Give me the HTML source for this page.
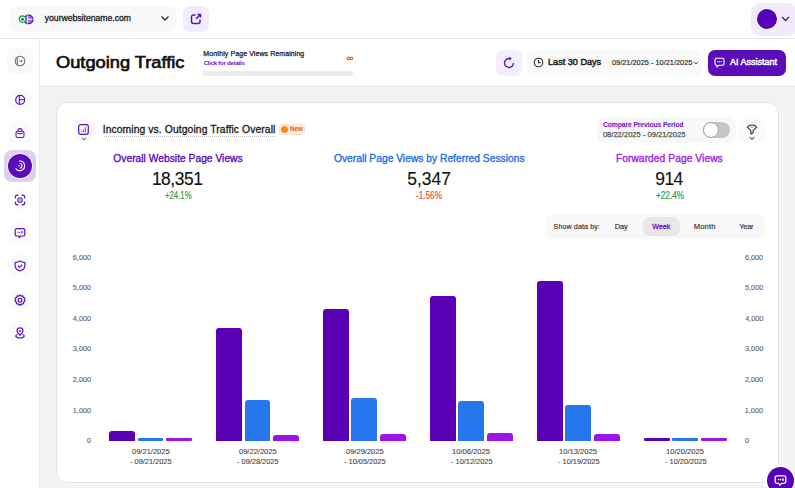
<!DOCTYPE html>
<html><head><meta charset="utf-8">
<style>
*{box-sizing:border-box;margin:0;padding:0}
html,body{width:795px;height:488px;overflow:hidden;background:#fff;font-family:"Liberation Sans",sans-serif;color:#1a1a1a}
.abs{position:absolute}
.t{position:absolute;white-space:nowrap;line-height:1}
#hdr{position:absolute;left:0;top:0;width:795px;height:39px;background:#fff;border-bottom:1px solid #e6e6e6}
#side{position:absolute;left:0;top:39px;width:40px;height:449px;background:#fff;border-right:1px solid #ececec}
#main{position:absolute;left:40px;top:87px;width:755px;height:401px;background:#f2f2f2}
#titlebar{position:absolute;left:40px;top:39px;width:755px;height:48px;background:#fff;border-bottom:1px solid #e3e3e3}
.sb{position:absolute;left:8px;width:24px;height:24px;border-radius:12px;background:#fbfbfb}
.card{position:absolute;left:56px;top:102px;width:723px;height:381px;background:#fff;border:1px solid #e2e2e2;border-radius:11px;box-shadow:1px 1.5px 0 1px #f7f7f7}
.bar{position:absolute;border-radius:3px 3px 0 0}
.b1{background:#5a00b5}.b2{background:#2677ee}.b3{background:#9c14e8}
</style></head><body>
<div id="hdr"></div>
<div id="side"></div>
<div id="titlebar"></div>
<div id="main"></div>
<div class="abs" style="left:10px;top:6px;width:166px;height:26px;border-radius:8px;background:#f8f8f8"></div>
<svg class="abs" style="left:17px;top:13px" width="18" height="13" viewBox="0 0 18 13">
  <circle cx="11.6" cy="6.4" r="4.3" fill="#9b6ee0" stroke="#5a10c0" stroke-width="1.3"/>
  <line x1="10.7" y1="2.3" x2="10.7" y2="10.5" stroke="#fff" stroke-width="1"/>
  <line x1="10.7" y1="6.3" x2="15.5" y2="6.3" stroke="#fff" stroke-width="1"/>
  <circle cx="5.5" cy="6.2" r="3.2" fill="#fff" stroke="#18b060" stroke-width="1.3"/>
  <circle cx="5.5" cy="6.2" r="1.5" fill="#118a40"/>
</svg>
<svg class="abs" style="left:159.5px;top:15.3px" width="10" height="7" viewBox="0 0 10 7"><path d="M1.5 1.5 L5 5 L8.5 1.5" fill="none" stroke="#333" stroke-width="1.4"/></svg>
<div class="abs" style="left:183px;top:6px;width:26px;height:26px;border-radius:7px;background:#f2edfc"></div>
<svg class="abs" style="left:190px;top:13px" width="12" height="12" viewBox="0 0 12 12"><path d="M5.5 2 H3.5 A2 2 0 0 0 1.5 4 V8.5 A2 2 0 0 0 3.5 10.5 H8 A2 2 0 0 0 10 8.5 V6.5" fill="none" stroke="#5a10c0" stroke-width="1.5"/><path d="M6 6 L10.5 1.5 M7.5 1.5 H10.5 V4.5" fill="none" stroke="#5a10c0" stroke-width="1.5"/></svg>
<div class="abs" style="left:751px;top:3px;width:46px;height:33px;border-radius:9px;background:#f1ebfb"></div>
<div class="abs" style="left:756px;top:8px;width:22px;height:22px;border-radius:11px;background:#fff"></div>
<div class="abs" style="left:757px;top:9px;width:20px;height:20px;border-radius:10px;background:#5600b8"></div>
<svg class="abs" style="left:781px;top:16px" width="9" height="6" viewBox="0 0 9 6"><path d="M1 1 L4.5 4.5 L8 1" fill="none" stroke="#333" stroke-width="1.3"/></svg>
<div class="t" style="left:44.76px;top:13.94px;font-size:8.69px;letter-spacing:-0.030px;font-weight:normal;color:#222;-webkit-text-stroke:0.3px #222;">yourwebsitename.com</div>
<div class="t" style="left:56.28px;top:54.02px;font-size:16.28px;letter-spacing:0.000px;font-weight:normal;color:#111;-webkit-text-stroke:0.65px #111;transform:scaleX(1.1213);transform-origin:0 0;">Outgoing Traffic</div>
<div class="t" style="left:203.34px;top:50.35px;font-size:7.03px;letter-spacing:0.075px;font-weight:normal;color:#222;-webkit-text-stroke:0.25px #222;">Monthly Page Views Remaining</div>
<div class="t" style="left:203.66px;top:59.66px;font-size:6.07px;letter-spacing:-0.250px;font-weight:bold;color:#6a10d0;">Click for details</div>
<svg class="abs" style="left:345px;top:55px" width="10" height="7" viewBox="0 0 10 7"><circle cx="3.4" cy="3.3" r="1.3" fill="none" stroke="#f0670f" stroke-width="1.15"/><circle cx="6.4" cy="3.3" r="1.3" fill="none" stroke="#f0670f" stroke-width="1.15"/></svg>
<div class="abs" style="left:203px;top:71px;width:150px;height:5px;border-radius:2px;background:#ececec"></div>
<div class="abs" style="left:496px;top:49.5px;width:26px;height:26px;border-radius:7px;background:#f3eefc"></div>
<svg class="abs" style="left:501.8px;top:55.8px" width="14" height="14" viewBox="0 0 14 14"><path d="M11.5 7 A4.5 4.5 0 1 1 7.6 2.5" fill="none" stroke="#5a10c0" stroke-width="1.35"/><path d="M7.2 0.8 L9.9 2.6 L7.2 4.4 Z" fill="#5a10c0"/></svg>
<div class="abs" style="left:527px;top:50px;width:175px;height:26px;border-radius:7px;background:#f9f9f9"></div>
<svg class="abs" style="left:532.9px;top:57px" width="11" height="11" viewBox="0 0 11 11"><circle cx="5.5" cy="5.5" r="4.3" fill="none" stroke="#333" stroke-width="1.1"/><path d="M5.5 2.9 V5.6 H7.7" fill="none" stroke="#333" stroke-width="1.1"/></svg>
<svg class="abs" style="left:693px;top:61px" width="6" height="4" viewBox="0 0 6 4"><path d="M0.8 0.8 L3 3 L5.2 0.8" fill="none" stroke="#444" stroke-width="0.9"/></svg>
<div class="abs" style="left:708px;top:49.5px;width:78px;height:26px;border-radius:7px;background:#5a0cb8"></div>
<svg class="abs" style="left:714px;top:57px" width="11" height="11" viewBox="0 0 11 11"><path d="M2.5 1.2 H8.5 A1.5 1.5 0 0 1 10 2.7 V6.7 A1.5 1.5 0 0 1 8.5 8.2 H5 L3 10 V8.2 H2.5 A1.5 1.5 0 0 1 1 6.7 V2.7 A1.5 1.5 0 0 1 2.5 1.2 Z" fill="none" stroke="#fff" stroke-width="1.1"/><circle cx="3.8" cy="4.7" r="0.6" fill="#fff"/><circle cx="5.5" cy="4.7" r="0.6" fill="#fff"/><circle cx="7.2" cy="4.7" r="0.6" fill="#fff"/></svg>
<div class="t" style="left:548.17px;top:58.10px;font-size:8.86px;letter-spacing:0.000px;font-weight:normal;color:#222;-webkit-text-stroke:0.45px #222;transform:scaleX(1.0303);transform-origin:0 0;">Last 30 Days</div>
<div class="t" style="left:612.01px;top:58.91px;font-size:7.31px;letter-spacing:0.036px;font-weight:normal;color:#333;-webkit-text-stroke:0.2px #333;">09/21/2025 - 10/21/2025</div>
<div class="t" style="left:730.10px;top:58.13px;font-size:8.83px;letter-spacing:0.000px;font-weight:normal;color:#fff;-webkit-text-stroke:0.45px #fff;transform:scaleX(1.0166);transform-origin:0 0;">AI Assistant</div>
<div class="abs" style="left:7px;top:47.5px;width:26px;height:26.5px;border-radius:8px;background:#f9f9f9"></div>
<svg class="abs" style="left:14px;top:54.7px" width="12" height="12" viewBox="0 0 12 12"><circle cx="6" cy="6" r="4.8" fill="none" stroke="#6a6a6a" stroke-width="1.05"/><path d="M3.3 2.3 V9.7" stroke="#6a6a6a" stroke-width="1.05"/><path d="M5 6 H8.3" stroke="#999" stroke-width="1.1"/><path d="M6.9 4.5 L8.5 6 L6.9 7.5 Z" fill="#6a6a6a"/></svg>
<div class="sb" style="top:88px"></div>
<svg class="abs" style="left:14px;top:94px" width="12" height="12" viewBox="0 0 12 12"><circle cx="6.2" cy="5.8" r="4.5" fill="none" stroke="#5a10c0" stroke-width="1.2"/><path d="M5.3 1.3 V10.3 M5.3 5.8 H10.7" fill="none" stroke="#5a10c0" stroke-width="1.1"/></svg>
<div class="sb" style="top:121px"></div>
<svg class="abs" style="left:14px;top:127px" width="12" height="12" viewBox="0 0 12 12"><path d="M4 4.2 V3.6 A2 2 0 0 1 8 3.6 V4.2" fill="none" stroke="#5a10c0" stroke-width="1.1"/><rect x="2" y="4.2" width="8" height="6.3" rx="1.8" fill="none" stroke="#5a10c0" stroke-width="1.1"/><path d="M3.2 6 Q6 8 8.8 6" fill="none" stroke="#5a10c0" stroke-width="1"/></svg>
<div class="abs" style="left:4px;top:150px;width:32px;height:32px;border-radius:8px;background:#dcd0f3"></div>
<div class="abs" style="left:6.8px;top:152.8px;width:26.4px;height:26.4px;border-radius:14px;background:#f4f0fb"></div>
<div class="abs" style="left:7.6px;top:153.6px;width:24.8px;height:24.8px;border-radius:13px;background:#5a0cb8"></div>
<svg class="abs" style="left:12px;top:158px" width="16" height="16" viewBox="0 0 16 16"><path d="M6.97 3.07 A4.8 4.8 0 1 1 3.64 10.2" fill="none" stroke="#fff" stroke-width="1.1"/><path d="M7.8 5.5 A2.3 2.3 0 0 1 7.8 10.1" fill="none" stroke="#fff" stroke-width="1.1"/><circle cx="7" cy="7.8" r="0.8" fill="#fff"/></svg>
<div class="sb" style="top:188px"></div>
<svg class="abs" style="left:14px;top:193.6px" width="12" height="12" viewBox="0 0 12 12"><path d="M1.3 4 V3.2 A2 2 0 0 1 3.3 1.2 H4 M8 1.2 H8.7 A2 2 0 0 1 10.7 3.2 V4 M10.7 8 V8.8 A2 2 0 0 1 8.7 10.8 H8 M4 10.8 H3.3 A2 2 0 0 1 1.3 8.8 V8" fill="none" stroke="#5a10c0" stroke-width="1.2" stroke-linecap="round"/><circle cx="6" cy="6" r="2.3" fill="none" stroke="#5a10c0" stroke-width="1.1"/><circle cx="6" cy="6" r="0.7" fill="#5a10c0"/></svg>
<div class="sb" style="top:221px"></div>
<svg class="abs" style="left:14px;top:226.5px" width="12" height="12" viewBox="0 0 12 12"><path d="M2.8 1.6 H9.2 A1.6 1.6 0 0 1 10.8 3.2 V7.4 A1.6 1.6 0 0 1 9.2 9 H6.6 L5.3 10.5 L4.2 9 H2.8 A1.6 1.6 0 0 1 1.2 7.4 V3.2 A1.6 1.6 0 0 1 2.8 1.6 Z" fill="none" stroke="#5a10c0" stroke-width="1.2" stroke-linejoin="round"/><circle cx="3.9" cy="5.3" r="0.6" fill="#5a10c0"/><circle cx="5.7" cy="5.3" r="0.6" fill="#5a10c0"/><path d="M8.1 4.1 V6.5" stroke="#5a10c0" stroke-width="1.1"/></svg>
<div class="sb" style="top:254px"></div>
<svg class="abs" style="left:14px;top:260px" width="12" height="12" viewBox="0 0 12 12"><path d="M6 1.1 C7.4 2.1 9 2.5 10.9 2.7 V5.8 C10.9 8.4 8.7 10.1 6 11 C3.3 10.1 1.1 8.4 1.1 5.8 V2.7 C3 2.5 4.6 2.1 6 1.1 Z" fill="none" stroke="#5a10c0" stroke-width="1.2" stroke-linejoin="round"/><path d="M3.9 5.7 L5.5 7.2 L8.2 4.6" fill="none" stroke="#5a10c0" stroke-width="1.2"/></svg>
<div class="sb" style="top:287.5px"></div>
<svg class="abs" style="left:14px;top:293.5px" width="12" height="12" viewBox="0 0 12 12"><path d="M6 1 L7.2 2.1 L8.8 1.8 L9.3 3.4 L10.8 4.1 L10.3 5.6 L11 7 L9.7 8 L9.6 9.6 L8 9.8 L7 11 L6 10.3 L5 11 L4 9.8 L2.4 9.6 L2.3 8 L1 7 L1.7 5.6 L1.2 4.1 L2.7 3.4 L3.2 1.8 L4.8 2.1 Z" fill="none" stroke="#5a10c0" stroke-width="1.2" stroke-linejoin="round"/><circle cx="6" cy="6.2" r="1.9" fill="none" stroke="#5a10c0" stroke-width="1.2"/></svg>
<div class="sb" style="top:320.7px"></div>
<svg class="abs" style="left:14px;top:326.7px" width="12" height="12" viewBox="0 0 12 12"><path d="M6 8.2 C4 6.4 3 5 3 3.8 A3 3 0 0 1 9 3.8 C9 5 8 6.4 6 8.2 Z" fill="none" stroke="#5a10c0" stroke-width="1.3"/><circle cx="6" cy="3.9" r="1" fill="#5a10c0"/><path d="M3.5 7.5 C1.5 8 1.3 9.8 3 10.4 C4.5 11 7.5 11 9 10.4 C10.7 9.8 10.5 8 8.5 7.5" fill="none" stroke="#5a10c0" stroke-width="1.2"/></svg>
<div class="card"></div>
<div class="abs" style="left:71.2px;top:117px;width:25px;height:25px;border-radius:13px;background:#f9f9f9"></div>
<svg class="abs" style="left:78.4px;top:124.2px" width="11" height="11" viewBox="0 0 11 11"><rect x="0.7" y="0.7" width="9.6" height="9.6" rx="2" fill="none" stroke="#5a10c0" stroke-width="1.2"/><path d="M3.6 8.3 V7.2 M5.5 8.3 V5.2 M7.4 8.3 V3.2" stroke="#8a60dc" stroke-width="1.2"/></svg>
<svg class="abs" style="left:80.8px;top:136.6px" width="6" height="4" viewBox="0 0 6 4"><path d="M0.6 0.6 L2.9 2.9 L5.2 0.6" fill="none" stroke="#888" stroke-width="1.1"/></svg>
<div class="abs" style="left:104px;top:136px;width:171px;height:1px;border-top:1px dotted #bdbdbd"></div>
<div class="abs" style="left:279.3px;top:124px;width:25.4px;height:11.4px;border-radius:3px;background:#fff1e4;border:1px solid #fde3cc"></div>
<div class="abs" style="left:281.1px;top:126.2px;width:7px;height:7px;border-radius:4px;background:#f7881c"></div>
<div class="abs" style="left:597px;top:116.5px;width:139px;height:26px;border-radius:7px;background:#f8f8f8"></div>
<div class="abs" style="left:703.4px;top:121.6px;width:26.2px;height:16.2px;border-radius:8.1px;background:#c6c6c6"></div>
<div class="abs" style="left:703.4px;top:121.6px;width:15.6px;height:16.2px;border-radius:8px;background:#fff;border:1px solid #a0a0a0"></div>
<div class="abs" style="left:739px;top:116.5px;width:25.5px;height:26px;border-radius:7px;background:#fafafa"></div>
<svg class="abs" style="left:746px;top:124px" width="12" height="17" viewBox="0 0 12 17"><path d="M1.3 3.2 L3.4 1.3 H8.6 L10.7 3.2 L7.1 6.6 V8.9 L4.9 9.9 V6.6 Z" fill="none" stroke="#333" stroke-width="1.1" stroke-linejoin="round"/><path d="M3.9 3.2 H8.1" stroke="#aaa" stroke-width="0.9"/><path d="M3.7 13.2 L6 15.3 L8.3 13.2" fill="none" stroke="#555" stroke-width="1.1"/></svg>
<div class="abs" style="left:546px;top:214px;width:219px;height:25px;border-radius:7px;background:#f8f8f8"></div>
<div class="abs" style="left:642.5px;top:217px;width:37px;height:19px;border-radius:7px;background:#e8e8e8"></div>
<div class="t" style="left:102.67px;top:125.05px;font-size:10.34px;letter-spacing:0.100px;font-weight:normal;color:#1a1a1a;-webkit-text-stroke:0.3px #1a1a1a;">Incoming vs. Outgoing Traffic Overall</div>
<div class="t" style="left:289.99px;top:126.20px;font-size:6.38px;letter-spacing:-0.061px;font-weight:bold;color:#f0501e;">New</div>
<div class="t" style="left:602.92px;top:122.06px;font-size:6.90px;letter-spacing:-0.163px;font-weight:bold;color:#6a10d0;">Compare Previous Period</div>
<div class="t" style="left:602.90px;top:131.38px;font-size:7.59px;letter-spacing:-0.004px;font-weight:normal;color:#555;-webkit-text-stroke:0.25px #555;">08/22/2025 - 09/21/2025</div>
<div class="t" style="left:113.34px;top:154.36px;font-size:10.21px;letter-spacing:0.037px;font-weight:normal;color:#5a10c0;-webkit-text-stroke:0.35px #5a10c0;">Overall Website Page Views</div>
<div class="t" style="left:151.89px;top:171.25px;font-size:17.43px;letter-spacing:-0.448px;font-weight:normal;color:#111;-webkit-text-stroke:0.15px #111;">18,351</div>
<div class="t" style="left:164.61px;top:191.34px;font-size:10.00px;letter-spacing:0.000px;font-weight:normal;color:#1e9a55;-webkit-text-stroke:0.15px #1e9a55;transform:scaleX(0.7766);transform-origin:0 0;">+24.1%</div>
<div class="t" style="left:333.94px;top:154.36px;font-size:10.21px;letter-spacing:0.035px;font-weight:normal;color:#1f6fe6;-webkit-text-stroke:0.35px #1f6fe6;">Overall Page Views by Referred Sessions</div>
<div class="t" style="left:407.30px;top:171.25px;font-size:17.43px;letter-spacing:-0.001px;font-weight:normal;color:#111;-webkit-text-stroke:0.15px #111;">5,347</div>
<div class="t" style="left:416.13px;top:191.34px;font-size:10.00px;letter-spacing:0.000px;font-weight:normal;color:#ea4a2a;-webkit-text-stroke:0.15px #ea4a2a;transform:scaleX(0.8188);transform-origin:0 0;">-1.56%</div>
<div class="t" style="left:615.88px;top:154.36px;font-size:10.21px;letter-spacing:0.081px;font-weight:normal;color:#a01ee6;-webkit-text-stroke:0.35px #a01ee6;">Forwarded Page Views</div>
<div class="t" style="left:655.22px;top:171.25px;font-size:17.43px;letter-spacing:-0.506px;font-weight:normal;color:#111;-webkit-text-stroke:0.15px #111;">914</div>
<div class="t" style="left:655.59px;top:191.34px;font-size:10.00px;letter-spacing:0.000px;font-weight:normal;color:#1e9a55;-webkit-text-stroke:0.15px #1e9a55;transform:scaleX(0.8186);transform-origin:0 0;">+22.4%</div>
<div class="t" style="left:553.58px;top:224.38px;font-size:7.11px;letter-spacing:0.100px;font-weight:normal;color:#222;-webkit-text-stroke:0.1px #222;">Show data by:</div>
<div class="t" style="left:614.81px;top:223.14px;font-size:7.39px;letter-spacing:-0.083px;font-weight:normal;color:#222;-webkit-text-stroke:0.1px #222;">Day</div>
<div class="t" style="left:652.26px;top:223.45px;font-size:7.03px;letter-spacing:0.089px;font-weight:normal;color:#6a10d0;-webkit-text-stroke:0.3px #6a10d0;">Week</div>
<div class="t" style="left:693.68px;top:222.88px;font-size:7.70px;letter-spacing:0.100px;font-weight:normal;color:#222;-webkit-text-stroke:0.1px #222;">Month</div>
<div class="t" style="left:739.32px;top:223.14px;font-size:7.39px;letter-spacing:-0.245px;font-weight:normal;color:#222;-webkit-text-stroke:0.1px #222;">Year</div>
<div class="t" style="left:87.00px;top:437.07px;font-size:7.30px;letter-spacing:0.000px;font-weight:normal;color:#6a6a6a;-webkit-text-stroke:0.15px #6a6a6a;">0</div>
<div class="t" style="left:745.01px;top:437.07px;font-size:7.30px;letter-spacing:0.000px;font-weight:normal;color:#6a6a6a;-webkit-text-stroke:0.15px #6a6a6a;">0</div>
<div class="t" style="left:72.81px;top:406.52px;font-size:7.30px;letter-spacing:0.000px;font-weight:normal;color:#6a6a6a;-webkit-text-stroke:0.15px #6a6a6a;">1,000</div>
<div class="t" style="left:744.75px;top:406.52px;font-size:7.30px;letter-spacing:0.000px;font-weight:normal;color:#6a6a6a;-webkit-text-stroke:0.15px #6a6a6a;">1,000</div>
<div class="t" style="left:72.81px;top:375.97px;font-size:7.30px;letter-spacing:-0.000px;font-weight:normal;color:#6a6a6a;-webkit-text-stroke:0.15px #6a6a6a;">2,000</div>
<div class="t" style="left:744.93px;top:375.97px;font-size:7.30px;letter-spacing:0.000px;font-weight:normal;color:#6a6a6a;-webkit-text-stroke:0.15px #6a6a6a;">2,000</div>
<div class="t" style="left:72.81px;top:345.42px;font-size:7.30px;letter-spacing:0.000px;font-weight:normal;color:#6a6a6a;-webkit-text-stroke:0.15px #6a6a6a;">3,000</div>
<div class="t" style="left:745.01px;top:345.42px;font-size:7.30px;letter-spacing:-0.000px;font-weight:normal;color:#6a6a6a;-webkit-text-stroke:0.15px #6a6a6a;">3,000</div>
<div class="t" style="left:72.81px;top:314.87px;font-size:7.30px;letter-spacing:0.000px;font-weight:normal;color:#6a6a6a;-webkit-text-stroke:0.15px #6a6a6a;">4,000</div>
<div class="t" style="left:745.15px;top:314.87px;font-size:7.30px;letter-spacing:-0.000px;font-weight:normal;color:#6a6a6a;-webkit-text-stroke:0.15px #6a6a6a;">4,000</div>
<div class="t" style="left:72.81px;top:284.32px;font-size:7.30px;letter-spacing:0.000px;font-weight:normal;color:#6a6a6a;-webkit-text-stroke:0.15px #6a6a6a;">5,000</div>
<div class="t" style="left:745.01px;top:284.32px;font-size:7.30px;letter-spacing:-0.000px;font-weight:normal;color:#6a6a6a;-webkit-text-stroke:0.15px #6a6a6a;">5,000</div>
<div class="t" style="left:72.81px;top:253.77px;font-size:7.30px;letter-spacing:-0.000px;font-weight:normal;color:#6a6a6a;-webkit-text-stroke:0.15px #6a6a6a;">6,000</div>
<div class="t" style="left:744.93px;top:253.77px;font-size:7.30px;letter-spacing:0.000px;font-weight:normal;color:#6a6a6a;-webkit-text-stroke:0.15px #6a6a6a;">6,000</div>
<div class="bar b1" style="left:108.9px;top:431.0px;width:25.8px;height:9.7px;border-radius:3px 3px 0 0"></div>
<div class="bar b2" style="left:137.5px;top:437.9px;width:25.8px;height:2.8px;border-radius:1px"></div>
<div class="bar b3" style="left:166.1px;top:437.9px;width:25.8px;height:2.8px;border-radius:1px"></div>
<div class="t" style="left:131.60px;top:449.08px;font-size:6.76px;letter-spacing:0.000px;font-weight:normal;color:#4a4a4a;-webkit-text-stroke:0.12px #4a4a4a;transform:scaleX(1.1146);transform-origin:0 0;">09/21/2025</div>
<div class="t" style="left:129.87px;top:459.18px;font-size:6.76px;letter-spacing:0.000px;font-weight:normal;color:#4a4a4a;-webkit-text-stroke:0.12px #4a4a4a;transform:scaleX(1.0970);transform-origin:0 0;">- 09/21/2025</div>
<div class="bar b1" style="left:215.9px;top:328.0px;width:25.8px;height:112.7px;border-radius:3px 3px 0 0"></div>
<div class="bar b2" style="left:244.5px;top:399.5px;width:25.8px;height:41.2px;border-radius:3px 3px 0 0"></div>
<div class="bar b3" style="left:273.1px;top:435.2px;width:25.8px;height:5.5px;border-radius:3px 3px 0 0"></div>
<div class="t" style="left:238.57px;top:449.08px;font-size:6.76px;letter-spacing:0.000px;font-weight:normal;color:#4a4a4a;-webkit-text-stroke:0.12px #4a4a4a;transform:scaleX(1.1146);transform-origin:0 0;">09/22/2025</div>
<div class="t" style="left:236.84px;top:459.18px;font-size:6.76px;letter-spacing:0.000px;font-weight:normal;color:#4a4a4a;-webkit-text-stroke:0.12px #4a4a4a;transform:scaleX(1.0970);transform-origin:0 0;">- 09/28/2025</div>
<div class="bar b1" style="left:322.8px;top:308.5px;width:25.8px;height:132.2px;border-radius:3px 3px 0 0"></div>
<div class="bar b2" style="left:351.4px;top:397.5px;width:25.8px;height:43.2px;border-radius:3px 3px 0 0"></div>
<div class="bar b3" style="left:380.0px;top:433.6px;width:25.8px;height:7.1px;border-radius:3px 3px 0 0"></div>
<div class="t" style="left:345.54px;top:449.08px;font-size:6.76px;letter-spacing:0.000px;font-weight:normal;color:#4a4a4a;-webkit-text-stroke:0.12px #4a4a4a;transform:scaleX(1.1146);transform-origin:0 0;">09/29/2025</div>
<div class="t" style="left:343.81px;top:459.18px;font-size:6.76px;letter-spacing:0.000px;font-weight:normal;color:#4a4a4a;-webkit-text-stroke:0.12px #4a4a4a;transform:scaleX(1.0970);transform-origin:0 0;">- 10/05/2025</div>
<div class="bar b1" style="left:429.8px;top:296.2px;width:25.8px;height:144.5px;border-radius:3px 3px 0 0"></div>
<div class="bar b2" style="left:458.4px;top:400.9px;width:25.8px;height:39.8px;border-radius:3px 3px 0 0"></div>
<div class="bar b3" style="left:487.0px;top:432.7px;width:25.8px;height:8.0px;border-radius:3px 3px 0 0"></div>
<div class="t" style="left:452.24px;top:449.08px;font-size:6.76px;letter-spacing:0.000px;font-weight:normal;color:#4a4a4a;-webkit-text-stroke:0.12px #4a4a4a;transform:scaleX(1.1226);transform-origin:0 0;">10/06/2025</div>
<div class="t" style="left:450.78px;top:459.18px;font-size:6.76px;letter-spacing:0.000px;font-weight:normal;color:#4a4a4a;-webkit-text-stroke:0.12px #4a4a4a;transform:scaleX(1.0970);transform-origin:0 0;">- 10/12/2025</div>
<div class="bar b1" style="left:536.8px;top:281.0px;width:25.8px;height:159.7px;border-radius:3px 3px 0 0"></div>
<div class="bar b2" style="left:565.4px;top:405.4px;width:25.8px;height:35.3px;border-radius:3px 3px 0 0"></div>
<div class="bar b3" style="left:594.0px;top:433.5px;width:25.8px;height:7.2px;border-radius:3px 3px 0 0"></div>
<div class="t" style="left:559.21px;top:449.08px;font-size:6.76px;letter-spacing:0.000px;font-weight:normal;color:#4a4a4a;-webkit-text-stroke:0.12px #4a4a4a;transform:scaleX(1.1226);transform-origin:0 0;">10/13/2025</div>
<div class="t" style="left:557.75px;top:459.18px;font-size:6.76px;letter-spacing:0.000px;font-weight:normal;color:#4a4a4a;-webkit-text-stroke:0.12px #4a4a4a;transform:scaleX(1.0970);transform-origin:0 0;">- 10/19/2025</div>
<div class="bar b1" style="left:643.8px;top:438.4px;width:25.8px;height:2.3px;border-radius:1px"></div>
<div class="bar b2" style="left:672.4px;top:438.4px;width:25.8px;height:2.3px;border-radius:1px"></div>
<div class="bar b3" style="left:701.0px;top:438.4px;width:25.8px;height:2.3px;border-radius:1px"></div>
<div class="t" style="left:666.18px;top:449.08px;font-size:6.76px;letter-spacing:0.000px;font-weight:normal;color:#4a4a4a;-webkit-text-stroke:0.12px #4a4a4a;transform:scaleX(1.1226);transform-origin:0 0;">10/20/2025</div>
<div class="t" style="left:664.72px;top:459.18px;font-size:6.76px;letter-spacing:0.000px;font-weight:normal;color:#4a4a4a;-webkit-text-stroke:0.12px #4a4a4a;transform:scaleX(1.0970);transform-origin:0 0;">- 10/20/2025</div>
<div class="abs" style="left:765px;top:465px;width:31px;height:31px;border-radius:16px;background:#fff"></div>
<div class="abs" style="left:767px;top:467px;width:27px;height:27px;border-radius:14px;background:#5600b8"></div>
<svg class="abs" style="left:774px;top:474px" width="13" height="13" viewBox="0 0 13 13"><path d="M3 1.8 H10 A1.8 1.8 0 0 1 11.8 3.6 V7.6 A1.8 1.8 0 0 1 10 9.4 H7.5 L6 11.2 L4.5 9.4 H3 A1.8 1.8 0 0 1 1.2 7.6 V3.6 A1.8 1.8 0 0 1 3 1.8 Z" fill="none" stroke="#fff" stroke-width="1.3"/><circle cx="4.5" cy="5.6" r="0.8" fill="#fff"/><circle cx="6.6" cy="5.6" r="0.8" fill="#fff"/><path d="M9 4.2 V7" stroke="#fff" stroke-width="1.4"/></svg>
</body></html>
